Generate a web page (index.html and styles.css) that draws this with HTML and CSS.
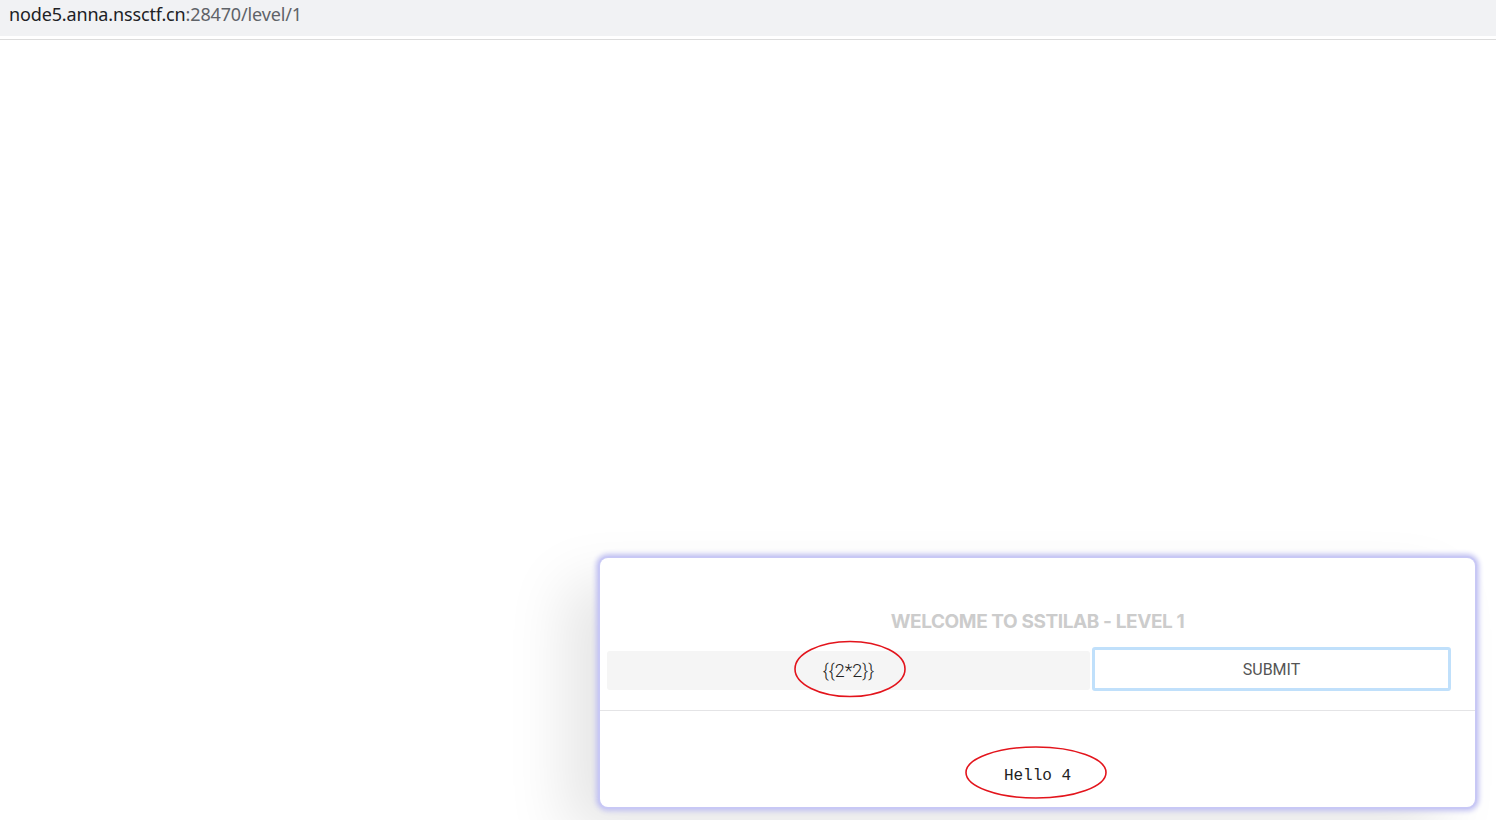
FILE: index.html
```html
<!DOCTYPE html>
<html>
<head>
    <meta charset="UTF-8">
    <meta name="viewport" content="width=device-width, initial-scale=1.0">
    <title>SSTILAB - Level 1</title>
    <link rel="stylesheet" href="styles.css">
</head>
<body>
    <div class="address-bar">
        <span class="host">node5.anna.nssctf.cn</span><span class="path">:28470/level/1</span>
    </div>

    <div class="page">
        <div class="card">
            <div class="card-top">
                <h1>WELCOME TO SSTILAB - LEVEL 1</h1>
                <form class="form-row">
                    <input type="text" class="field" value="{{2*2}}">
                    <button type="button" class="submit">SUBMIT</button>
                </form>
            </div>
            <div class="card-bottom">
                <pre class="result">Hello 4</pre>
            </div>

            <!-- red marks drawn on the screenshot -->
            <svg class="marks" width="875" height="250" viewBox="0 0 875 250">
                <ellipse cx="250" cy="111" rx="55" ry="27.5" fill="none" stroke="#e3141c" stroke-width="1.6"/>
                <ellipse cx="436" cy="214.5" rx="70" ry="25.5" fill="none" stroke="#e3141c" stroke-width="1.6"/>
            </svg>
        </div>
    </div>
</body>
</html>
```

FILE: styles.css
```css
html, body {
    height: 820px;
    overflow: hidden;
}

body {
    margin: 0;
    padding: 0;
    background: white;
    font-family: "Open Sans", "Noto Sans", sans-serif;
}

.address-bar {
    height: 36px;
    background: #f1f2f4;
    border-bottom: 3px solid white;
    box-shadow: 0 1px 0 #dcdcdc;
    padding-left: 9px;
    font-family: "Noto Sans", sans-serif;
    font-size: 18px;
    line-height: 29px;
    letter-spacing: -0.15px;
}

.host {
    color: #202124;
}

.path {
    color: #5f6368;
}

.page {
    height: 781px;
    box-sizing: border-box;
    padding: 519px 0 0 600px;
}

.card {
    position: relative;
    width: 875px;
    height: 249px;
    background: white;
    border-radius: 8px;
    box-shadow: 0 0 0 2px #c8c8f5, 0 0 5px 4px #c2c2f2, -35px 25px 60px rgba(0, 0, 0, 0.1);
}

.card-top {
    padding: 52px 0 19px 0;
    border-bottom: 1px solid #e4e4e6;
}

h1 {
    margin: 0 0 13px 0;
    text-align: center;
    font-family: Inter, sans-serif;
    font-size: 19px;
    font-weight: 700;
    line-height: 24px;
    letter-spacing: -0.4px;
    color: #cccccc;
}

.form-row {
    display: flex;
    align-items: center;
    height: 44px;
    margin: 0;
    padding: 0 24px 0 7px;
}

.field {
    width: 483px;
    height: 39px;
    box-sizing: border-box;
    border: none;
    border-radius: 3px;
    background: #f5f5f5;
    text-align: center;
    font-family: Roboto, sans-serif;
    font-size: 18px;
    font-weight: 300;
    color: #222;
    outline: none;
    margin-top: 2px;
}

.submit {
    margin-left: 2px;
    width: 359px;
    height: 44px;
    box-sizing: border-box;
    border: 3px solid #c0e0fb;
    border-radius: 3px;
    background: white;
    font-family: Roboto, sans-serif;
    font-size: 16px;
    color: #555;
}

.card-bottom {
    padding-top: 55px;
    text-align: center;
}

.result {
    margin: 0;
    font-family: "Liberation Mono", monospace;
    font-size: 16px;
    line-height: 20px;
    color: #222;
}

.marks {
    position: absolute;
    left: 0;
    top: 0;
    pointer-events: none;
}
```
